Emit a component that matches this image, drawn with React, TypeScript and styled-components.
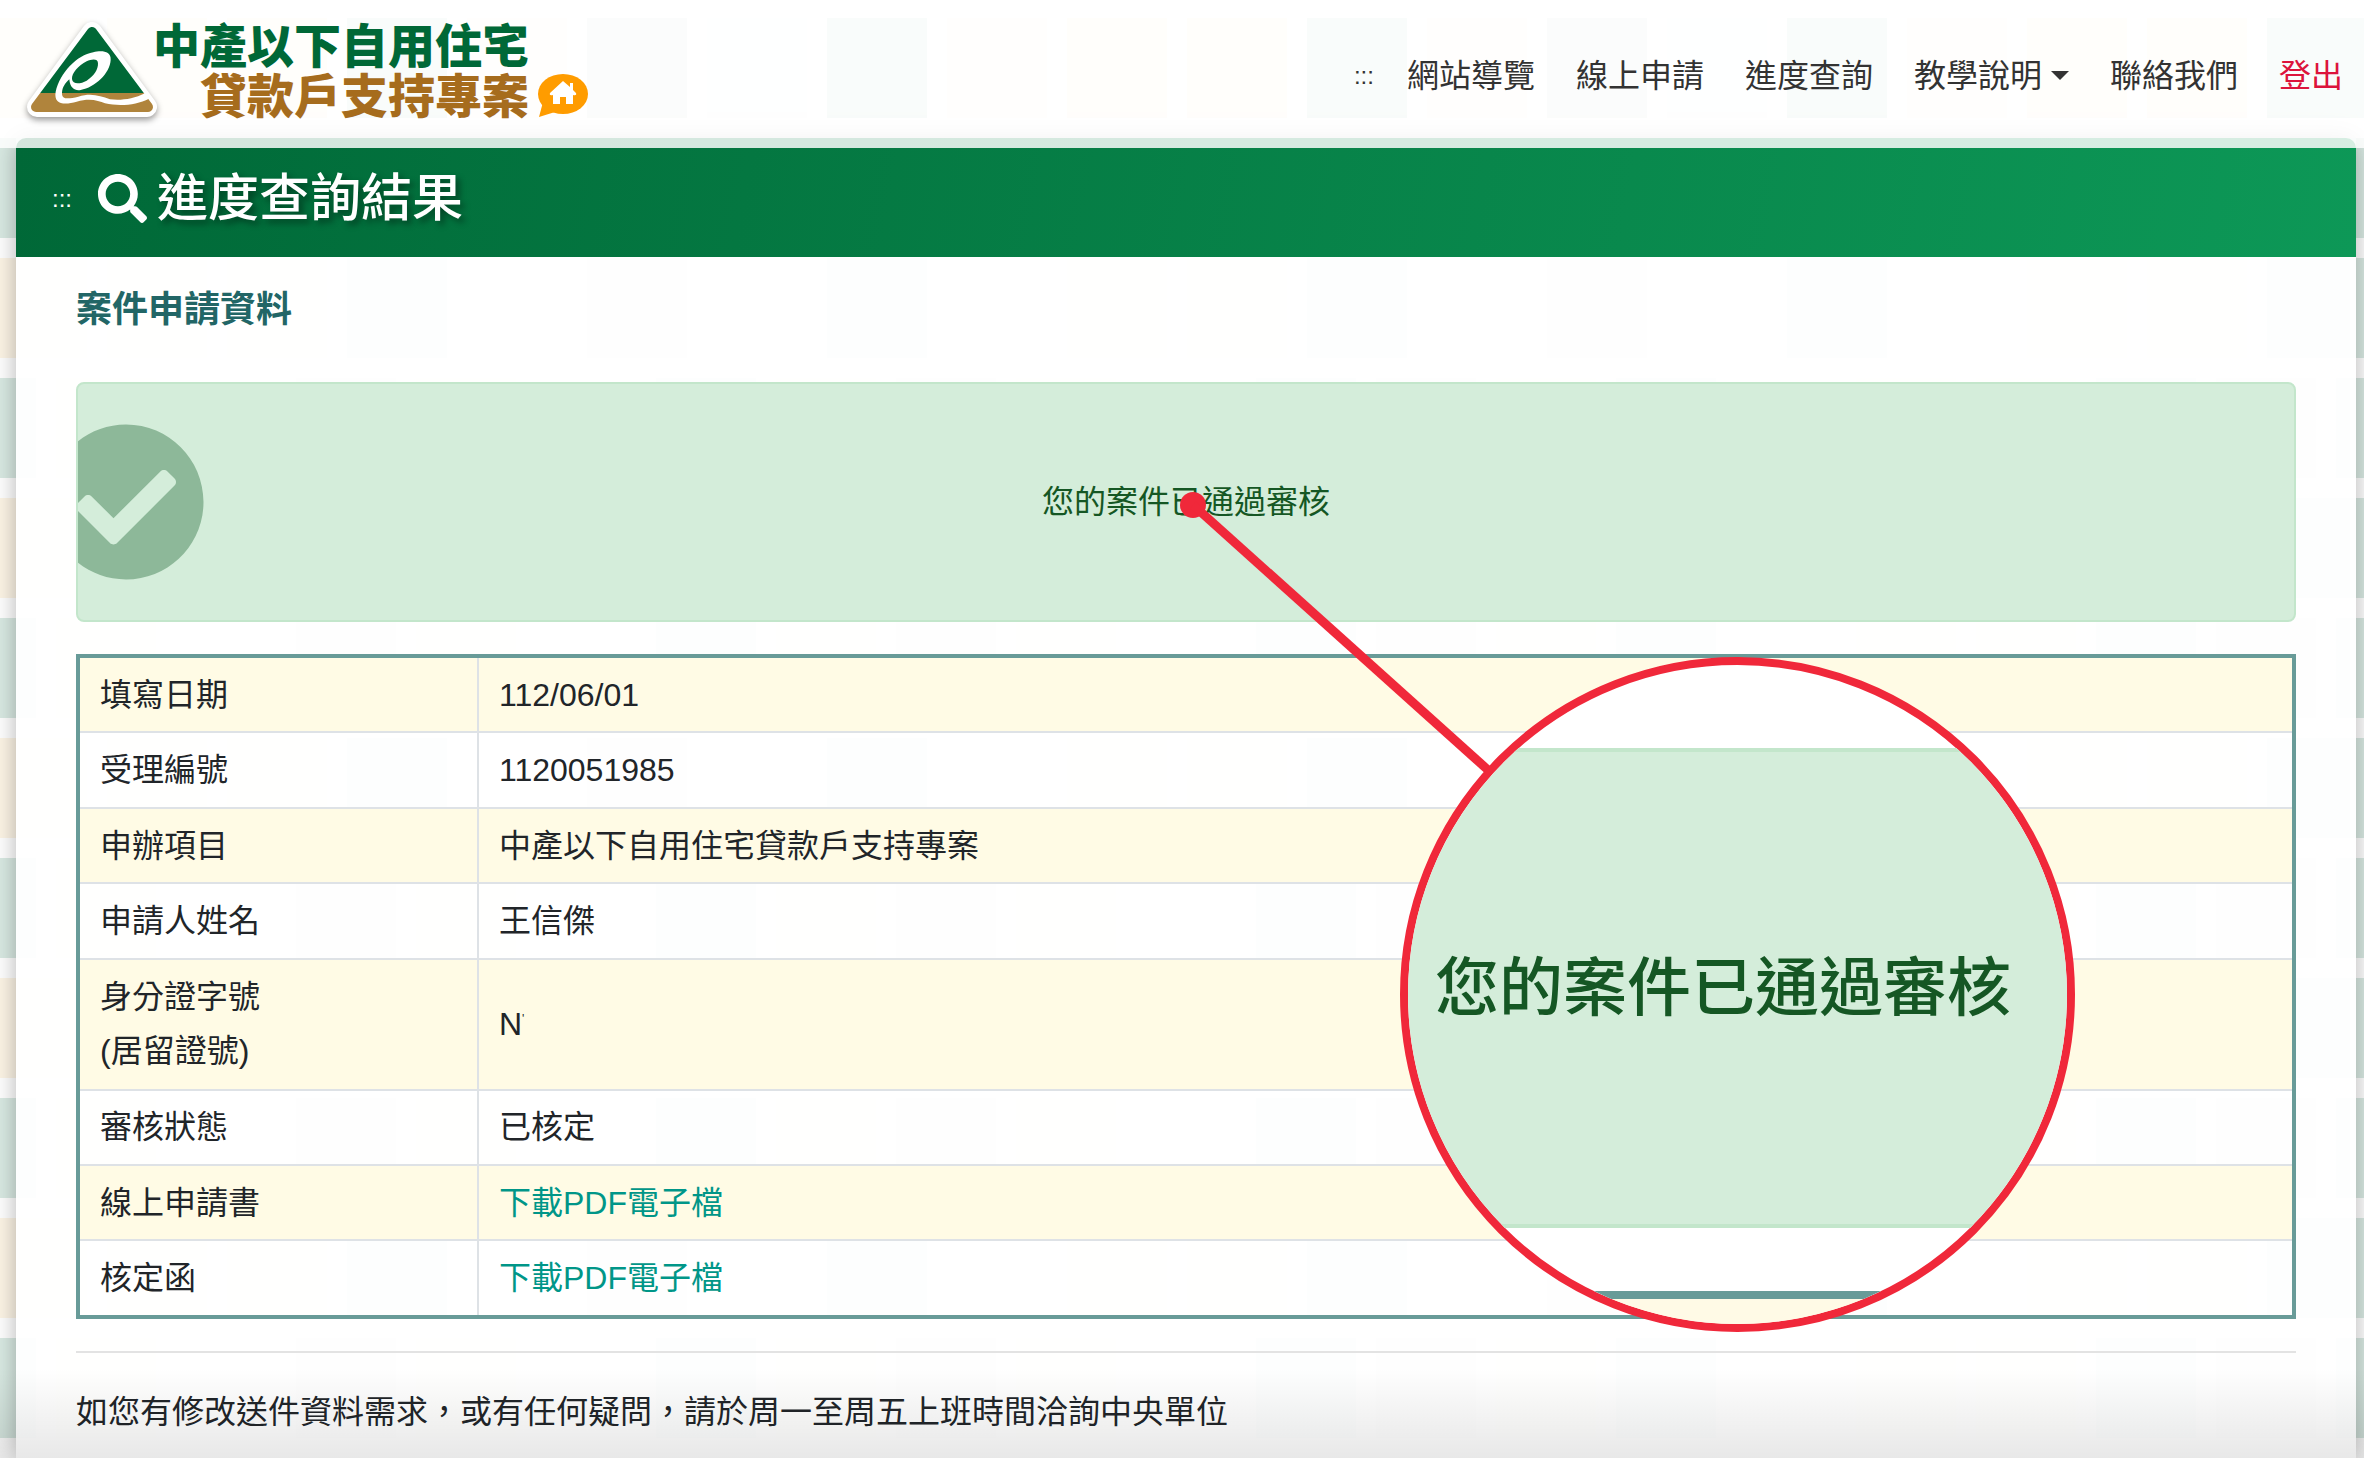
import React from "react";
import styled, { createGlobalStyle } from "styled-components";
import { FaCheckCircle, FaSearch } from "react-icons/fa";

const cream = "#fdf5e6";
const sand = "#fef9f2";
const mint = "#d9eae3";
const sage = "#e6edea";
const pale = "#fafbfb";

const evenRow = [cream, cream, cream, mint, sand, sage, pale, mint, sand, cream, cream, mint, sand, sage, pale, mint, sand, cream, cream, mint];
const oddRow = [mint, cream, sand, sage, cream, pale, mint, cream, sage, cream, sand, mint, sage, cream, mint, pale, cream, cream, mint, sage];

const tiles = (colors: string[], x: number) => {
  const stops = colors
    .map((c, i) => `${c} ${i * 120}px ${i * 120 + 100}px, #fff ${i * 120 + 100}px ${i * 120 + 120}px`)
    .join(", ");
  return `linear-gradient(90deg, ${stops}) ${x}px 0 / 2400px 100% repeat`;
};

const GlobalStyle = createGlobalStyle`
  * { box-sizing: border-box; }
  html { background: #fff; }
  body {
    margin: 0;
    color: #212529;
    font-family: "Liberation Sans", "Noto Sans CJK TC", sans-serif;
    font-size: 32px;
    line-height: 54px;
  }
  a { text-decoration: none; }
`;

const Page = styled.div`
  position: relative;
  height: 100vh;
  overflow: hidden;
  isolation: isolate;
`;

const Backdrop = styled.div`
  position: absolute;
  inset: 18px 0 0;
  z-index: -1;
  overflow: hidden;
`;

const TileBand = styled.div<{ $odd: boolean }>`
  height: 100px;
  margin-bottom: 20px;
  background: ${(p) => (p.$odd ? tiles(oddRow, -64) : tiles(evenRow, -13))};
`;

const Header = styled.header`
  position: absolute;
  inset: 0 0 auto;
  z-index: 2;
  display: flex;
  align-items: center;
  justify-content: space-between;
  height: 148px;
  padding: 0 21px 0 20px;
  background: rgba(255, 255, 255, 0.83);
`;

const Brand = styled.a`
  display: flex;
  align-items: flex-start;
  height: 112px;
`;

const BrandMark = styled.svg`
  width: 144px;
  height: 112px;
  margin-right: -11px;
  filter: drop-shadow(0 3px 3px rgba(0, 0, 0, 0.4));
`;

const BrandName = styled.span`
  display: grid;
  justify-items: end;
  font-family: "Noto Sans CJK TC", sans-serif;
  font-weight: 900;
  font-size: 47px;
  line-height: 50px;
`;

const BrandLine = styled.span<{ $color: string }>`
  color: ${(p) => p.$color};
`;

const HouseMark = styled.svg`
  width: 52px;
  height: 44px;
  margin: 56px 0 0 8px;
`;

const Nav = styled.nav`
  display: flex;
  align-items: center;
  gap: 41px;
  padding-top: 3px;
`;

const NavLink = styled.a<{ $accent?: boolean }>`
  color: ${(p) => (p.$accent ? "#dc143c" : "#333")};
`;

const NavButton = styled.button`
  display: flex;
  align-items: center;
  gap: 9px;
  padding: 0;
  border: 0;
  background: none;
  color: #333;
  font: inherit;
  &::after {
    content: "";
    border: 9px solid transparent;
    border-top-color: currentColor;
    border-bottom: 0;
  }
`;

const AccessKey = styled.a<{ $light?: boolean }>`
  color: ${(p) => (p.$light ? "#fff" : "#333")};
  font-size: 24px;
  margin-right: ${(p) => (p.$light ? "26px" : "-8px")};
  padding-bottom: ${(p) => (p.$light ? "8px" : "0")};
`;

const Shade = styled.div`
  position: relative;
  display: flow-root;
  &::before {
    content: "";
    position: absolute;
    inset: 138px 8px 0 16px;
    border-radius: 10px 10px 0 0;
    box-shadow: 0 0 24px rgba(0, 0, 0, 0.3);
    clip-path: polygon(-40px -40px, calc(100% + 40px) -40px, calc(100% + 40px) 100%, 100% 100%, 100% 0, 0 0, 0 100%, -40px 100%);
  }
`;

const Panel = styled.main`
  margin: 138px 8px 0 16px;
  min-height: calc(100vh - 138px);
  border-radius: 10px 10px 0 0;
  overflow: hidden;
  background: rgba(255, 255, 255, 0.94);
`;

const Banner = styled.div`
  display: flex;
  align-items: center;
  height: 119px;
  padding: 10px 36px 0;
  background: linear-gradient(100deg, #006837, #0d9857);
  color: #fff;
`;

const BannerTitle = styled.h1`
  display: flex;
  align-items: center;
  gap: 10px;
  margin: 0;
  padding-bottom: 8px;
  font-size: 51px;
  font-weight: 500;
  line-height: 64px;
  text-shadow: 4px 4px 6px rgba(0, 0, 0, 0.4);
  svg {
    width: 49px;
    height: 49px;
  }
`;

const Content = styled.section`
  padding: 26px 60px 0;
`;

const SectionTitle = styled.h2`
  margin: 0 0 45px;
  color: #226666;
  font-size: 36px;
  line-height: 54px;
`;

const Alert = styled.div`
  position: relative;
  display: grid;
  place-items: center;
  height: 240px;
  margin-bottom: 32px;
  border: 2px solid #c3e6cb;
  border-radius: 8px;
  overflow: hidden;
  background: #d4edda;
  color: #155724;
`;

const AlertIcon = styled(FaCheckCircle)`
  position: absolute;
  left: -32px;
  top: 38px;
  width: 160px;
  height: 160px;
  color: #8db899;
`;

const CaseTable = styled.table`
  width: 100%;
  height: 665px;
  border: 4px solid #689b98;
  border-spacing: 0;
`;

const Row = styled.tr`
  &:nth-child(odd) {
    background: rgba(255, 250, 220, 0.75);
  }
  &:not(:last-child) > * {
    border-bottom: 2px solid #dee2e6;
  }
`;

const Label = styled.th`
  width: 399px;
  padding: 9px 20px;
  border-right: 2px solid #dee2e6;
  font-weight: 400;
  text-align: left;
`;

const Value = styled.td`
  padding: 9px 20px;
`;

const Tick = styled.span`
  font-size: 12px;
  line-height: 12px;
  vertical-align: 12px;
`;

const Download = styled.a`
  color: #009688;
`;

const Rule = styled.hr`
  height: 2px;
  margin: 32px 0;
  border: 0;
  background: #e3e3e3;
`;

const Note = styled.p`
  margin: 0;
`;

const BottomFade = styled.div`
  position: absolute;
  inset: auto 0 0;
  height: 90px;
  background: linear-gradient(rgba(0, 0, 0, 0), rgba(0, 0, 0, 0.09));
  pointer-events: none;
`;

const Pointer = styled.svg`
  position: absolute;
  z-index: 3;
  left: 1180px;
  top: 492px;
  width: 312px;
  height: 284px;
`;

const Lens = styled.aside`
  position: absolute;
  z-index: 3;
  left: 1400px;
  top: 657px;
  width: 675px;
  height: 675px;
  border: 8px solid #f0283a;
  border-radius: 50%;
  overflow: hidden;
  background: #fff;
`;

const LensAlert = styled.div`
  display: flex;
  align-items: center;
  height: 480px;
  margin-top: 83px;
  padding-left: 27px;
  border: solid #c3e6cb;
  border-width: 4px 0;
  background: #d4edda;
  color: #155724;
  font-size: 64px;
  font-weight: 500;
  white-space: nowrap;
`;

const LensTable = styled.div`
  height: 60px;
  margin-top: 63px;
  border-top: 8px solid #689b98;
  background: #fffae6;
`;

const rows: { label: React.ReactNode; value: React.ReactNode; link?: boolean }[] = [
  { label: "填寫日期", value: "112/06/01" },
  { label: "受理編號", value: "1120051985" },
  { label: "申辦項目", value: "中產以下自用住宅貸款戶支持專案" },
  { label: "申請人姓名", value: "王信傑" },
  { label: <>身分證字號<br />(居留證號)</>, value: <>N<Tick>'</Tick></> },
  { label: "審核狀態", value: "已核定" },
  { label: "線上申請書", value: "下載PDF電子檔", link: true },
  { label: "核定函", value: "下載PDF電子檔", link: true },
];

export default function App() {
  return (
    <Page>
      <GlobalStyle />
      <Backdrop>
        {Array.from({ length: 12 }, (_, i) => (
          <TileBand key={i} $odd={i % 2 === 1} />
        ))}
      </Backdrop>
      <Header>
        <Brand href="#">
          <BrandMark viewBox="0 0 144 112" aria-hidden="true">
            <defs>
              <linearGradient id="land" gradientUnits="userSpaceOnUse" x1="0" y1="0" x2="0" y2="100">
                <stop offset="0.75" stopColor="#006837" />
                <stop offset="0.75" stopColor="#b0843c" />
              </linearGradient>
            </defs>
            <path d="M72 14 L127 89 H17 Z" fill="#fff" stroke="#fff" strokeWidth="20" strokeLinejoin="round" />
            <path d="M72 14 L128 89 H16 Z" fill="url(#land)" stroke="url(#land)" strokeWidth="10" strokeLinejoin="round" />
            <g transform="translate(-10 -8) scale(0.3333)">
              <path
                d="M302 150 C304 120 270 122 250 127 C200 135 150 190 137 245 C130 285 165 285 200 275 C240 263 265 272 285 280 C330 290 380 285 417 266 L405 250 C370 268 330 272 300 268 C270 258 245 248 205 260 C175 267 155 270 156 248 C157 232 165 220 178 208 C180 235 195 243 212 240 C255 232 300 190 302 150 Z"
                fill="#fff"
              />
              <path d="M264 160 C264 145 245 147 230 154 C205 167 185 190 186 207 C188 225 212 222 230 212 C252 198 265 178 264 160 Z" fill="#006837" />
            </g>
          </BrandMark>
          <BrandName>
            <BrandLine $color="#006837">中產以下自用住宅</BrandLine>
            <BrandLine $color="#a66c1d">貸款戶支持專案</BrandLine>
          </BrandName>
          <HouseMark viewBox="0 0 52 44" aria-hidden="true">
            <ellipse cx="26" cy="20" rx="25" ry="20" fill="#ff9c00" />
            <path d="M6 28 L2 43 L18 38 Z" fill="#ff9c00" />
            <path d="M26 7 L33 13 V9 H36 V16 L39 19 Q40 22 36 21 V30 H29 V23 H23 V30 H16 V21 Q12 22 13 19 Z" fill="#fff" />
          </HouseMark>
        </Brand>
        <Nav>
          <AccessKey href="#nav">:::</AccessKey>
          <NavLink href="#">網站導覽</NavLink>
          <NavLink href="#">線上申請</NavLink>
          <NavLink href="#">進度查詢</NavLink>
          <NavButton type="button">教學說明</NavButton>
          <NavLink href="#">聯絡我們</NavLink>
          <NavLink href="#" $accent>登出</NavLink>
        </Nav>
      </Header>
      <Shade>
        <Panel>
          <Banner>
            <AccessKey href="#main" $light>:::</AccessKey>
            <BannerTitle>
              <FaSearch />
              進度查詢結果
            </BannerTitle>
          </Banner>
          <Content>
            <SectionTitle>案件申請資料</SectionTitle>
            <Alert role="status">
              <AlertIcon />
              您的案件已通過審核
            </Alert>
            <CaseTable>
              <tbody>
                {rows.map((r, i) => (
                  <Row key={i}>
                    <Label scope="row">{r.label}</Label>
                    <Value>{r.link ? <Download href="#">{r.value}</Download> : r.value}</Value>
                  </Row>
                ))}
              </tbody>
            </CaseTable>
            <Rule />
            <Note>如您有修改送件資料需求，或有任何疑問，請於周一至周五上班時間洽詢中央單位</Note>
          </Content>
        </Panel>
      </Shade>
      <BottomFade />
      <Pointer viewBox="0 0 312 284" aria-hidden="true">
        <circle cx="13" cy="13" r="13" fill="#f0283a" />
        <path d="M13 13 L308 278" stroke="#f0283a" strokeWidth="9" />
      </Pointer>
      <Lens>
        <LensAlert>您的案件已通過審核</LensAlert>
        <LensTable />
      </Lens>
    </Page>
  );
}
